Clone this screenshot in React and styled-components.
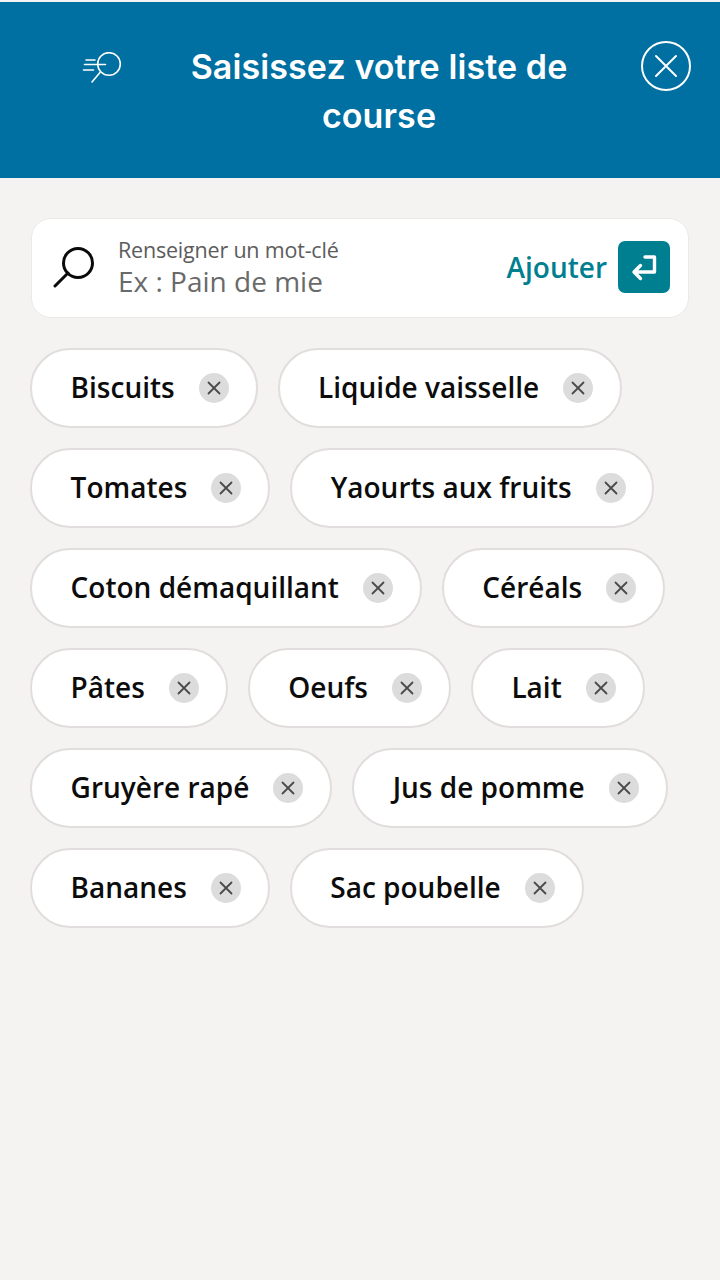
import React from "react";
import styled, { createGlobalStyle } from "styled-components";

const GlobalStyle = createGlobalStyle`
  html, body {
    margin: 0;
    padding: 0;
    background: #f4f3f2;
  }
  * {
    box-sizing: border-box;
  }
`;

const Page = styled.div`
  width: 720px;
  min-height: 1280px;
  background: #f4f3f2;
  padding-top: 2px;
  font-family: "Open Sans", sans-serif;
`;

const Header = styled.header`
  height: 176px;
  background: #006fa1;
  display: grid;
  grid-template-columns: 178px 1fr 140px;
  padding-top: 39px;
`;

const HeaderIconLeft = styled.div`
  display: flex;
  justify-content: flex-start;
  padding: 11px 0 0 82px;
`;

const HeaderIconRight = styled.div`
  display: flex;
  justify-content: flex-end;
  padding-right: 29px;
`;

const Title = styled.h1`
  margin: 2px 0 0;
  color: #fff;
  font-family: "Inter", sans-serif;
  font-weight: 600;
  font-size: 34px;
  letter-spacing: 0.1px;
  line-height: 48.5px;
  text-align: center;
`;

const Content = styled.main`
  padding: 40px 30px;
`;

const SearchBox = styled.div`
  height: 100px;
  margin: 0 1px;
  background: #fff;
  border: 1px solid #ebe9e7;
  border-radius: 20px;
  display: flex;
  align-items: center;
  padding: 0 18px 2px 21px;
`;

const SearchText = styled.div`
  flex: 1;
  margin: -2px 0 0 23px;
  display: flex;
  flex-direction: column;
`;

const SearchLabel = styled.span`
  font-size: 21.5px;
  line-height: 30px;
  letter-spacing: -0.2px;
  color: #5c5c5c;
`;

const SearchPlaceholder = styled.span`
  font-size: 28px;
  line-height: 33px;
  color: #6a6a6a;
`;

const AddLabel = styled.span`
  font-size: 28px;
  font-weight: 600;
  color: #007f90;
  margin-right: 11px;
`;

const AddButton = styled.button`
  width: 52px;
  height: 52px;
  border: 0;
  border-radius: 7px;
  background: #007f90;
  padding: 0;
  display: flex;
  align-items: center;
  justify-content: center;
`;

const Chips = styled.div`
  display: flex;
  flex-wrap: wrap;
  gap: 20px;
  margin-top: 30px;
`;

const Chip = styled.div`
  height: 80px;
  background: #fff;
  border: 2px solid #e2dddd;
  border-radius: 40px;
  display: flex;
  align-items: center;
  padding: 0 26.8px 0 38.6px;
`;

const ChipLabel = styled.span`
  font-size: 28px;
  line-height: 36px;
  margin-top: -2px;
  font-weight: 600;
  color: #0c0c0c;
  white-space: nowrap;
`;

const ChipRemove = styled.button`
  width: 30px;
  height: 30px;
  margin-left: 24px;
  border: 0;
  border-radius: 50%;
  background: #dcdcdc;
  padding: 0;
  display: flex;
  align-items: center;
  justify-content: center;
`;

const items = [
  "Biscuits",
  "Liquide vaisselle",
  "Tomates",
  "Yaourts aux fruits",
  "Coton démaquillant",
  "Céréals",
  "Pâtes",
  "Oeufs",
  "Lait",
  "Gruyère rapé",
  "Jus de pomme",
  "Bananes",
  "Sac poubelle",
];

const QuickSearchIcon = () => (
  <svg width="40" height="36" viewBox="0 0 40 36" fill="none" stroke="#fff" strokeWidth="1.6" strokeLinecap="round">
    <circle cx="27" cy="12" r="11.3" />
    <path d="M4 8h9M2.5 12.5h21M1.5 18h10M18 20.5L10 30" />
  </svg>
);

const CloseIcon = () => (
  <svg width="50" height="50" viewBox="0 0 50 50" fill="none" stroke="#fff" strokeWidth="2" strokeLinecap="round">
    <circle cx="25" cy="25" r="24" />
    <path d="M15 15l20 20M35 15L15 35" />
  </svg>
);

const SearchIcon = () => (
  <svg width="42" height="42" viewBox="0 0 42 42" fill="none" stroke="#0a0a0a" strokeWidth="3" strokeLinecap="round">
    <circle cx="25" cy="17" r="14.5" />
    <path d="M15 27L2 40" />
  </svg>
);

const EnterIcon = () => (
  <svg width="28" height="28" viewBox="0 0 28 28" fill="none" stroke="#fff" strokeWidth="3.4" strokeLinecap="round" strokeLinejoin="round">
    <path d="M15 4h9.5v15H4M10.5 12.5L4 19l6.5 6.5" />
  </svg>
);

const RemoveIcon = () => (
  <svg width="14" height="14" viewBox="0 0 14 14" fill="none" stroke="#4a4a4a" strokeWidth="1.8" strokeLinecap="round">
    <path d="M1.5 1.5l11 11M12.5 1.5l-11 11" />
  </svg>
);

const App = () => {
  return (
    <Page>
      <GlobalStyle />
      <Header>
        <HeaderIconLeft>
          <QuickSearchIcon />
        </HeaderIconLeft>
        <Title>Saisissez votre liste de course</Title>
        <HeaderIconRight>
          <CloseIcon />
        </HeaderIconRight>
      </Header>
      <Content>
        <SearchBox>
          <SearchIcon />
          <SearchText>
            <SearchLabel>Renseigner un mot-clé</SearchLabel>
            <SearchPlaceholder>Ex : Pain de mie</SearchPlaceholder>
          </SearchText>
          <AddLabel>Ajouter</AddLabel>
          <AddButton>
            <EnterIcon />
          </AddButton>
        </SearchBox>
        <Chips>
          {items.map((item) => (
            <Chip key={item}>
              <ChipLabel>{item}</ChipLabel>
              <ChipRemove>
                <RemoveIcon />
              </ChipRemove>
            </Chip>
          ))}
        </Chips>
      </Content>
    </Page>
  );
};

export default App;
